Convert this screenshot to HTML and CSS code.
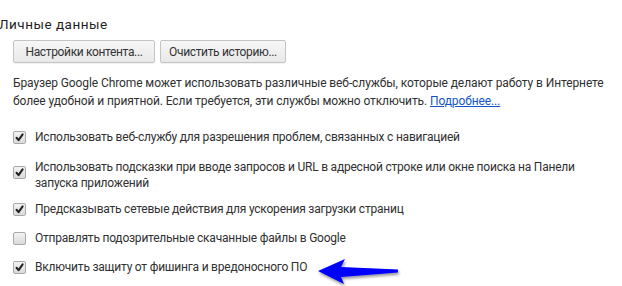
FILE: index.html
```html
<!DOCTYPE html>
<html lang="ru">
<head>
<meta charset="utf-8">
<link rel="stylesheet" href="styles.css">
</head>
<body>
<div class="page">
  <div class="title">Личные данные</div>
  <div class="section">
    <div class="buttons">
      <button class="btn btn-content">Настройки контента...</button>
      <button class="btn btn-history">Очистить историю...</button>
    </div>
    <p class="desc">Браузер Google Chrome может использовать различные веб-службы, которые делают работу в Интернете более удобной и приятной. Если требуется, эти службы можно отключить. <a class="link" href="#">Подробнее...</a></p>
    <div class="options">
      <label class="opt"><span class="cb on"><svg viewBox="0 0 13 13"><path d="M3 6.8 L5.4 9.6 L10.2 2.8" /></svg></span><span class="lbl">Использовать веб-службу для разрешения проблем, связанных с навигацией</span></label>
      <label class="opt opt-two"><span class="cb on"><svg viewBox="0 0 13 13"><path d="M3 6.8 L5.4 9.6 L10.2 2.8" /></svg></span><span class="lbl">Использовать подсказки при вводе запросов и URL в адресной строке или окне поиска на Панели запуска приложений</span></label>
      <label class="opt opt-after"><span class="cb on"><svg viewBox="0 0 13 13"><path d="M3 6.8 L5.4 9.6 L10.2 2.8" /></svg></span><span class="lbl">Предсказывать сетевые действия для ускорения загрузки страниц</span></label>
      <label class="opt"><span class="cb"></span><span class="lbl">Отправлять подозрительные скачанные файлы в Google</span></label>
      <label class="opt"><span class="cb on"><svg viewBox="0 0 13 13"><path d="M3 6.8 L5.4 9.6 L10.2 2.8" /></svg></span><span class="lbl">Включить защиту от фишинга и вредоносного ПО</span></label>
    </div>
  </div>
  <svg class="arrow" viewBox="0 0 90 30" width="90" height="30">
    <defs>
      <filter id="sh" x="-20%" y="-40%" width="140%" height="180%">
        <feGaussianBlur in="SourceAlpha" stdDeviation="1.5"/>
        <feOffset dx="1" dy="2" result="b"/>
        <feComponentTransfer><feFuncA type="linear" slope="0.45"/></feComponentTransfer>
        <feMerge><feMergeNode/><feMergeNode in="SourceGraphic"/></feMerge>
      </filter>
    </defs>
    <path filter="url(#sh)" d="M2 14 L29 2 L25 10 L82 12.5 L82 15.5 L25 20 L28 27 Z" fill="#0000ff"/>
  </svg>
</div>
</body>
</html>
```
FILE: styles.css
```css
html, body {
  margin: 0;
  padding: 0;
  background: #fff;
}
.page {
  position: relative;
  width: 622px;
  height: 286px;
  overflow: hidden;
  font-family: Roboto, "Liberation Sans", sans-serif;
  font-size: 12px;
  letter-spacing: -0.22px;
  color: #303030;
}
.title {
  margin: 16px 0 0 -1px;
  font-size: 13.5px;
  line-height: 16px;
  letter-spacing: 0.5px;
  color: #1e1e1e;
}
.section {
  padding-left: 13px;
}
.buttons {
  display: flex;
  gap: 5px;
  margin-top: 8px;
}
.btn {
  height: 23px;
  padding: 0;
  border: 1px solid #c4c4c4;
  border-radius: 2px;
  background: linear-gradient(#f7f7f7, #e8e8e8);
  font-family: inherit;
  font-size: 12px;
  letter-spacing: -0.35px;
  color: #333;
  box-shadow: 0 1px 0 rgba(0,0,0,0.05);
}
.btn-content { width: 142px; }
.btn-history { width: 126px; }
.desc {
  margin: 11px 0 0 0;
  width: 598px;
  line-height: 18px;
  letter-spacing: -0.1px;
}
.link {
  color: #1155cc;
  text-decoration: underline;
}
.options {
  display: flex;
  flex-direction: column;
  gap: 13px;
  margin-top: 19px;
}
.opt {
  display: flex;
  align-items: flex-start;
  gap: 9px;
  line-height: 16px;
}
.opt-two {
  margin-top: 1px;
}
.opt-after {
  margin-top: -3px;
}
.cb {
  flex: none;
  width: 11px;
  height: 11px;
  margin-top: 2px;
  border: 1px solid #a9a9a9;
  border-radius: 2px;
  background: linear-gradient(#f3f3f3, #dadada);
  display: flex;
}
.opt-two .cb {
  margin-top: 7px;
}
.cb svg {
  width: 11px;
  height: 11px;
}
.cb path {
  fill: none;
  stroke: #222;
  stroke-width: 2.4;
  stroke-linecap: round;
  stroke-linejoin: round;
}
.lbl {
  width: 545px;
}
.arrow {
  position: absolute;
  left: 316px;
  top: 257px;
}
```
